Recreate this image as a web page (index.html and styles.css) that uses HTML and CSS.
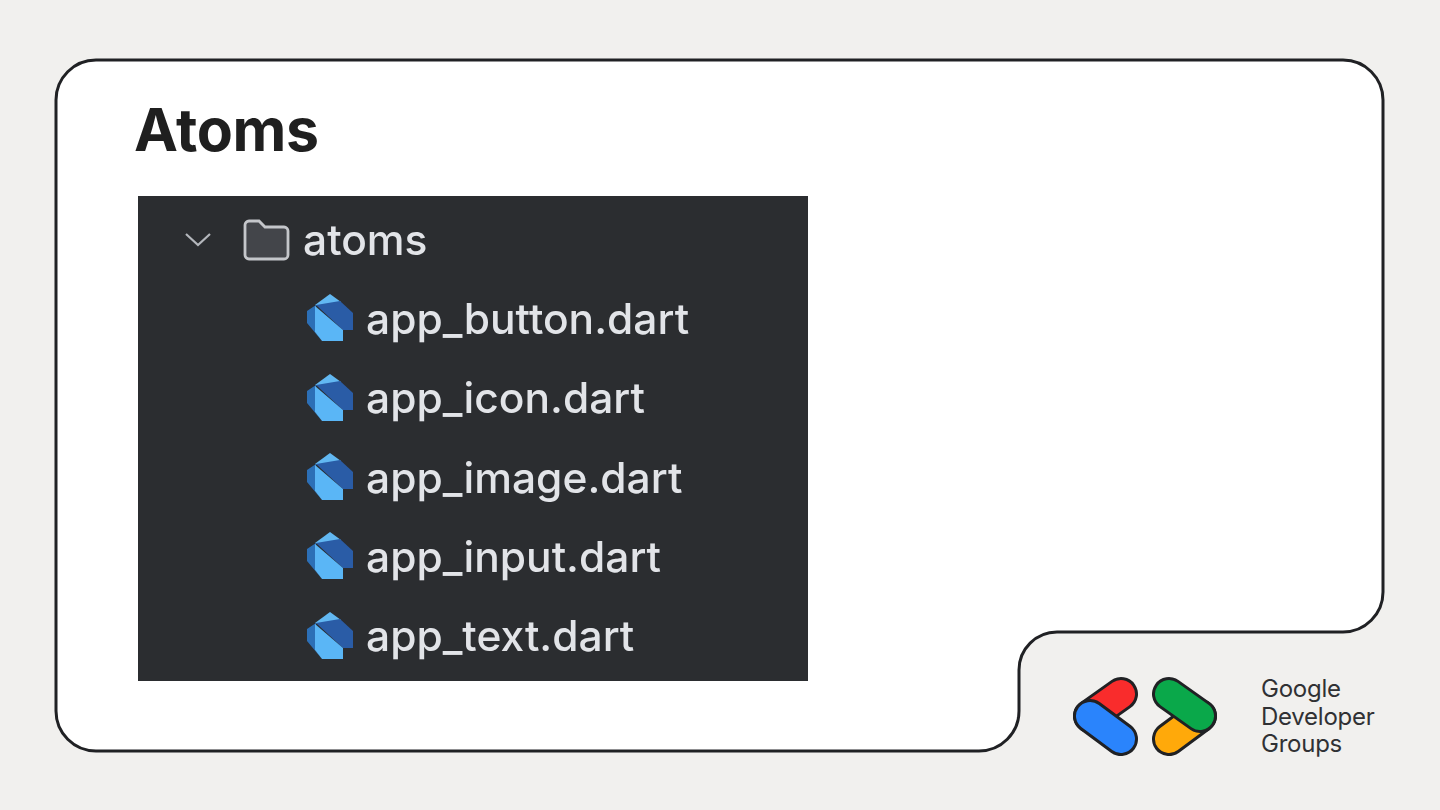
FILE: index.html
```html
<!DOCTYPE html>
<html lang="en">
<head>
<meta charset="utf-8">
<title>Atoms</title>
<link rel="stylesheet" href="styles.css">
</head>
<body>
<svg width="0" height="0" class="defs">
  <defs>
    <symbol id="dart" viewBox="0 0 47 48">
      <polygon points="9,11 0,17 0,29 15,47 8,38" fill="#2c6fb6"/>
      <polygon points="8,11 23,0 34,8 16,13" fill="#62b8f2"/>
      <polygon points="9,11 33,7 46,19 46,36 36,36" fill="#2a5ca6"/>
      <polygon points="8,12 36,36 36,47 15,47 8,38" fill="#5ab6f6"/>
    </symbol>
  </defs>
</svg>
<main class="slide">
  <svg class="card" width="1440" height="810" viewBox="0 0 1440 810" aria-hidden="true">
    <path d="M96 60H1343A40 40 0 0 1 1383 100V592A40 40 0 0 1 1343 632H1057A38 38 0 0 0 1019 670V711A40 40 0 0 1 979 751H96A40 40 0 0 1 56 711V100A40 40 0 0 1 96 60Z" fill="#fff" stroke="#202124" stroke-width="3"/>
  </svg>
  <h1 class="title">Atoms</h1>
  <section class="tree">
    <div class="row root">
      <svg class="chevron" width="28" height="16" viewBox="0 0 28 16"><path d="M2 2L14 13L26 2" fill="none" stroke="#b4b7bc" stroke-width="2.200"/></svg>
      <svg class="folder" width="48" height="42" viewBox="0 0 48 42"><path d="M3 6A4 4 0 0 1 7 2H17L23 8H42A4 4 0 0 1 46 12V36A4 4 0 0 1 42 40H7A4 4 0 0 1 3 36Z" fill="#43454a" stroke="#c4c6ca" stroke-width="2.800"/></svg>
      <span class="name">atoms</span>
    </div>
    <div class="row file"><svg class="dart" width="47" height="48"><use href="#dart"/></svg><span class="name">app_button.dart</span></div>
    <div class="row file"><svg class="dart" width="47" height="48"><use href="#dart"/></svg><span class="name">app_icon.dart</span></div>
    <div class="row file"><svg class="dart" width="47" height="48"><use href="#dart"/></svg><span class="name">app_image.dart</span></div>
    <div class="row file"><svg class="dart" width="47" height="48"><use href="#dart"/></svg><span class="name">app_input.dart</span></div>
    <div class="row file"><svg class="dart" width="47" height="48"><use href="#dart"/></svg><span class="name">app_text.dart</span></div>
  </section>
  <div class="brand">
    <svg class="logo" width="146" height="82" viewBox="1072 675 146 82" aria-hidden="true">
      <g fill="none" stroke-linecap="round">
        <path d="M1121 694L1090 716" stroke="#202124" stroke-width="34"/>
        <path d="M1121 694L1090 716" stroke="#f92c2c" stroke-width="28"/>
        <path d="M1090 716L1121 739" stroke="#202124" stroke-width="34"/>
        <path d="M1090 716L1121 739" stroke="#2a84fc" stroke-width="28"/>
        <path d="M1169 739L1200 716" stroke="#202124" stroke-width="34"/>
        <path d="M1169 739L1200 716" stroke="#ffa90a" stroke-width="28"/>
        <path d="M1169 694L1200 716" stroke="#202124" stroke-width="34"/>
        <path d="M1169 694L1200 716" stroke="#0aa84a" stroke-width="28"/>
      </g>
    </svg>
    <p class="brand-name">Google<br>Developer<br>Groups</p>
  </div>
</main>
</body>
</html>
```
FILE: styles.css
```css
html, body {
  margin: 0;
  padding: 0;
}
body {
  width: 1440px;
  height: 810px;
  overflow: hidden;
  background: #f1f0ee;
}
.defs {
  position: absolute;
}
.slide {
  position: relative;
  width: 1440px;
  height: 810px;
  box-sizing: border-box;
  padding: 90px 0 0 134px;
  font-family: "Inter", sans-serif;
}
.card {
  position: absolute;
  left: 0;
  top: 0;
}
.title {
  position: relative;
  margin: 0 0 26px;
  height: 80px;
  font-size: 59px;
  line-height: 80px;
  font-weight: 700;
  letter-spacing: -0.4px;
  color: #1f1f1f;
}
.tree {
  position: relative;
  width: 670px;
  height: 485px;
  margin-left: 4px;
  box-sizing: border-box;
  padding-top: 4px;
  background: #2b2d30;
  color: #e2e4e8;
  display: flex;
  flex-direction: column;
}
.row {
  display: flex;
  align-items: center;
  height: 79.300px;
}
.root {
  padding-left: 46px;
}
.file {
  padding-left: 169px;
}
.chevron {
  margin-right: 30px;
}
.folder {
  margin-right: 13px;
}
.dart {
  margin-right: 12px;
  margin-top: -1px;
  filter: blur(0.5px);
}
.name {
  font-size: 42.500px;
  line-height: 60px;
  font-weight: 500;
  filter: blur(0.5px);
}
.brand {
  position: absolute;
  left: 1072px;
  top: 675px;
  display: flex;
  align-items: center;
  gap: 43px;
}
.logo {
  display: block;
}
.brand-name {
  margin: 0;
  font-size: 24px;
  line-height: 27.500px;
  color: #303134;
  letter-spacing: -0.25px;
}
```
